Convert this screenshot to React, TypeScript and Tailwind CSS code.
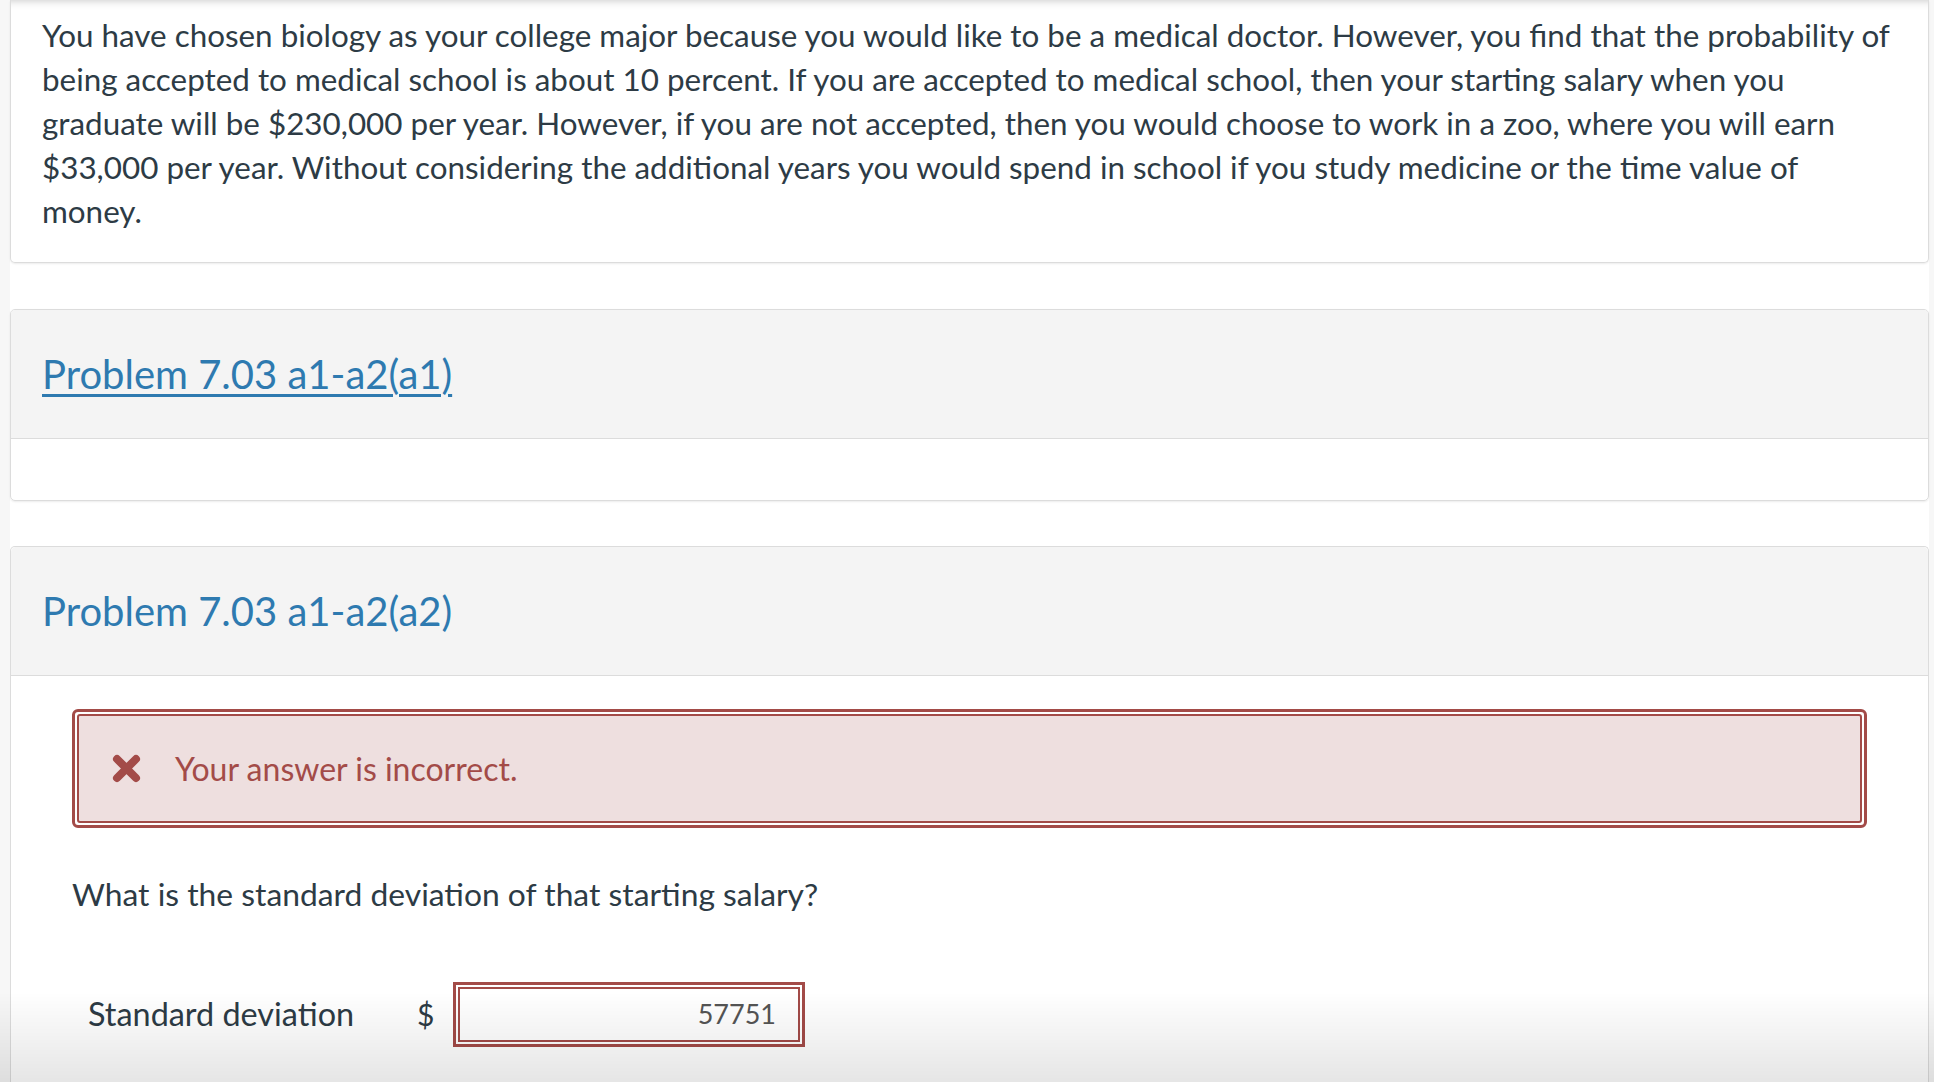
function CrossIcon() {
  return (
    <svg viewBox="0 0 29 29" className="h-[29px] w-[29px] shrink-0 text-[#a34b48]">
      <path d="M5 5 L24 24 M24 5 L5 24" stroke="currentColor" strokeWidth="8" strokeLinecap="round" fill="none" />
    </svg>
  );
}

export default function App() {
  return (
    <div className="min-h-screen bg-[#f7f7f7] pl-[10px] pr-[5px] font-['Lato',sans-serif]">
      <div className="bg-white shadow-[inset_0_10px_10px_-10px_rgba(0,0,0,0.25)]">
        {/* question stem */}
        <div className="rounded-b-[5px] border border-t-0 border-[#dcdcdc] pl-[31px] pr-[30px] pt-[13px] pb-[29px] text-[31.4px] leading-[44px] text-[#2d3b45] shadow-[0_1px_2px_rgba(0,0,0,0.08)]">
          You have chosen biology as your college major because you would like to be a medical doctor. However, you find
          that the probability of being accepted to medical school is about 10 percent. If you are accepted to medical
          school, then your starting salary when you graduate will be $230,000 per year. However, if you are not
          accepted, then you would choose to work in a zoo, where you will earn $33,000 per year. Without considering the
          additional years you would spend in school if you study medicine or the time value of money.
        </div>

        {/* part a1 */}
        <div className="mt-[46px] overflow-hidden rounded-[5px] border border-[#dcdcdc] shadow-[0_1px_2px_rgba(0,0,0,0.08)]">
          <div className="flex h-[129px] items-center border-b border-[#dcdcdc] bg-[#f4f4f4] pl-[31px]">
            <a
              href="#"
              className="text-[40px] text-[#2e7ab0] underline decoration-[3px] underline-offset-[5px]"
            >
              Problem 7.03 a1-a2(a1)
            </a>
          </div>
          <div className="h-[61px]" />
        </div>

        {/* part a2 */}
        <div className="mt-[45px] rounded-t-[5px] border border-b-0 border-[#dcdcdc]">
          <div className="flex h-[129px] items-center rounded-t-[5px] border-b border-[#dcdcdc] bg-[#f4f4f4] pl-[31px]">
            <h2 className="text-[40px] text-[#2e7ab0]">Problem 7.03 a1-a2(a2)</h2>
          </div>
          <div className="px-[61px] pt-[33px] pb-[160px]">
            <div className="rounded-[6px] border-[3px] border-[#a34b48] bg-white p-[2px]">
              <div className="flex h-[109px] items-center gap-[34px] rounded-[3px] border-2 border-[#a34b48] bg-[#eedfdf] pl-[33px]">
                <CrossIcon />
                <span className="text-[32px] text-[#a34b48]">Your answer is incorrect.</span>
              </div>
            </div>

            <p className="mt-[44px] text-[31.8px] leading-[44px] text-[#2d3b45]">
              What is the standard deviation of that starting salary?
            </p>

            <div className="mt-[66px] flex items-center pl-[16px] text-[#2d3b45]">
              <span className="w-[329px] text-[32.4px]">Standard deviation</span>
              <span className="w-[36px] text-[30px]">$</span>
              <div className="h-[65px] w-[352px] border-[3px] border-[#a34b48] bg-white p-[2px]">
                <div className="flex h-full items-center justify-end border-2 border-[#a34b48] pr-[22px] text-[27px] text-[#555555]">
                  57751
                </div>
              </div>
            </div>
          </div>
        </div>
      </div>
      <div className="pointer-events-none fixed bottom-0 left-0 right-0 h-[90px] bg-linear-to-b from-transparent to-black/10" />
    </div>
  );
}
